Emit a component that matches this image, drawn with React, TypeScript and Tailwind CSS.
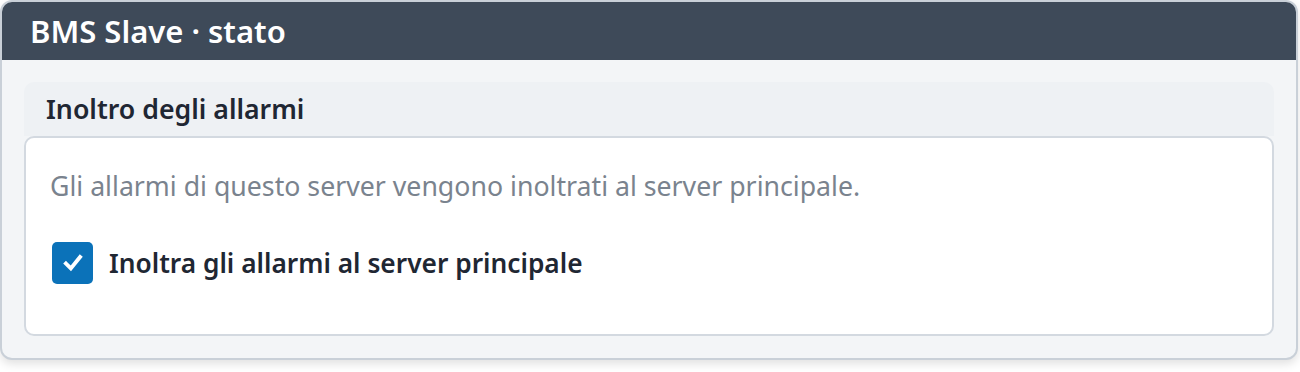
export default function App() {
	return (
		<div className="w-[1300px] h-[372px] bg-white font-['Noto_Sans',sans-serif]">
			<div className="w-[1298px] rounded-[12px] border-2 border-[#c9d0d8] bg-[#f3f5f7] overflow-hidden shadow-[0_4px_10px_rgba(0,0,0,0.12)]">
				<div className="h-[58px] bg-[#3e4a59] pl-[28px] flex items-center">
					<h1 className="text-white text-[31px] leading-none font-semibold">
						BMS Slave · stato
					</h1>
				</div>
				<div className="px-[22px] pt-[22px] pb-[22px]">
					<div className="rounded-t-[10px] bg-[#eef1f4] h-[54px] pl-[22px] flex items-center">
						<h2 className="text-[26.7px] leading-none font-semibold text-[#1f2733]">
							Inoltro degli allarmi
						</h2>
					</div>
					<div className="rounded-[10px] border-2 border-[#d3d9e0] bg-white h-[200px] px-[24px] pt-[32px]">
						<p className="text-[26.7px] leading-[32px] text-[#7a838e]">
							Gli allarmi di questo server vengono inoltrati al server principale.
						</p>
						<label className="mt-[40px] ml-[2px] flex items-center gap-[16px]">
							<span className="w-[41px] h-[42px] rounded-[5px] bg-[#0b72b9] flex items-center justify-center">
								<svg viewBox="0 0 24 24" className="w-[26px] h-[26px]" fill="none" stroke="white" strokeWidth={3.6} strokeLinecap="square" strokeLinejoin="miter">
									<path d="M5.5 12.5 L10 17 L18.5 6.5" />
								</svg>
							</span>
							<span className="text-[26.3px] leading-none font-semibold text-[#1f2733]">
								Inoltra gli allarmi al server principale
							</span>
						</label>
					</div>
				</div>
			</div>
		</div>
	);
}
